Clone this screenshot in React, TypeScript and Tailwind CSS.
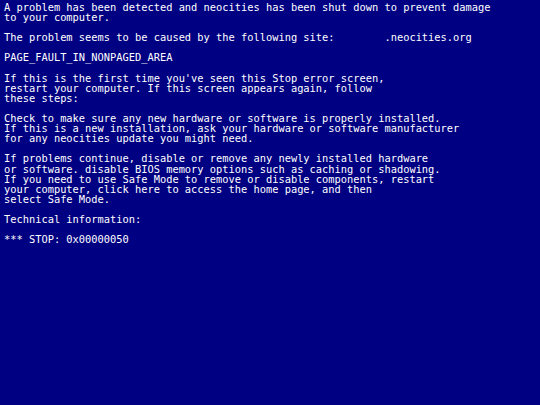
export default function App() {
  const text = `A problem has been detected and neocities has been shut down to prevent damage
to your computer.

The problem seems to be caused by the following site:        .neocities.org

PAGE_FAULT_IN_NONPAGED_AREA

If this is the first time you've seen this Stop error screen,
restart your computer. If this screen appears again, follow
these steps:

Check to make sure any new hardware or software is properly installed.
If this is a new installation, ask your hardware or software manufacturer
for any neocities update you might need.

If problems continue, disable or remove any newly installed hardware
or software. disable BIOS memory options such as caching or shadowing.
If you need to use Safe Mode to remove or disable components, restart
your computer, click here to access the home page, and then
select Safe Mode.

Technical information:

*** STOP: 0x00000050`;
  return (
    <div className="w-[540px] h-[405px] bg-[#000082] overflow-hidden">
      <pre className="m-0 pl-[4px] pt-[2px] text-white text-[10.36px] leading-[10.1px] whitespace-pre font-['DejaVu_Sans_Mono',monospace]">
        {text}
      </pre>
    </div>
  );
}
